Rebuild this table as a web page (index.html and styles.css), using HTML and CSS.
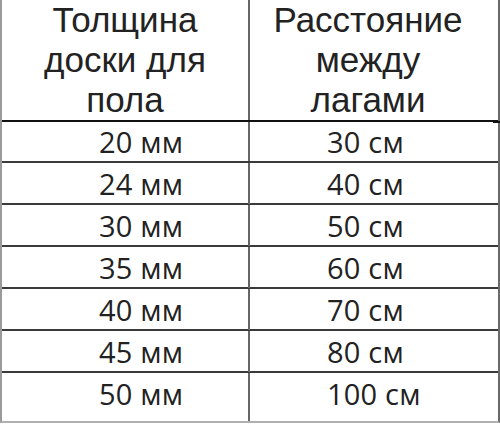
FILE: index.html
```html
<!DOCTYPE html>
<html lang="ru">
<head>
<meta charset="utf-8">
<link rel="stylesheet" href="styles.css">
</head>
<body>
<div class="table">
  <div class="row head">
    <div class="cell hl">Толщина<br>доски для<br>пола</div>
    <div class="cell hr">Расстояние<br>между<br>лагами</div>
  </div>
  <div class="row first"><div class="cell l">20 мм</div><div class="cell r">30 см</div></div>
  <div class="row"><div class="cell l">24 мм</div><div class="cell r">40 см</div></div>
  <div class="row"><div class="cell l">30 мм</div><div class="cell r">50 см</div></div>
  <div class="row"><div class="cell l">35 мм</div><div class="cell r">60 см</div></div>
  <div class="row"><div class="cell l">40 мм</div><div class="cell r">70 см</div></div>
  <div class="row"><div class="cell l">45 мм</div><div class="cell r">80 см</div></div>
  <div class="row last"><div class="cell l">50 мм</div><div class="cell r">100 см</div></div>
  <span class="tick"></span>
</div>
</body>
</html>
```
FILE: styles.css
```css
html, body {
  margin: 0;
  padding: 0;
  background: #fff;
}
.table {
  position: relative;
  width: 500px;
  height: 423px;
  box-sizing: border-box;
  border-left: 2px solid #9a9a9a;
  border-right: 2px solid #6a6a6a;
  border-bottom: 2px solid #b0b0b0;
  color: #222;
}
.row {
  display: grid;
  grid-template-columns: 248px 248px;
  height: 42px;
  box-sizing: border-box;
  border-bottom: 2px solid #3a3a3a;
}
.row.first { height: 41px; }
.row.last { height: 48px; border-bottom: none; }
.row.head {
  height: 122px;
  border-bottom: 2px solid #111;
}
.cell {
  box-sizing: border-box;
  border-right: 2px solid #666;
  font-family: "Open Sans", "Noto Sans", sans-serif;
  font-size: 29px;
  letter-spacing: 0.2px;
  line-height: 41px;
  white-space: nowrap;
}
.cell.r { border-right: none; padding-left: 77px; }
.cell.l { padding-left: 97px; }
.row.first .cell { line-height: 39px; }
.head .cell {
  font-family: "Liberation Sans", Arial, sans-serif;
  font-size: 35px;
  letter-spacing: 0;
  line-height: 40px;
  text-align: center;
}
.head .cell.hr { padding-right: 12px; border-right: none; }
.tick {
  position: absolute;
  right: -2px;
  top: 121px;
  width: 7px;
  height: 2px;
  background: #111;
}
```
